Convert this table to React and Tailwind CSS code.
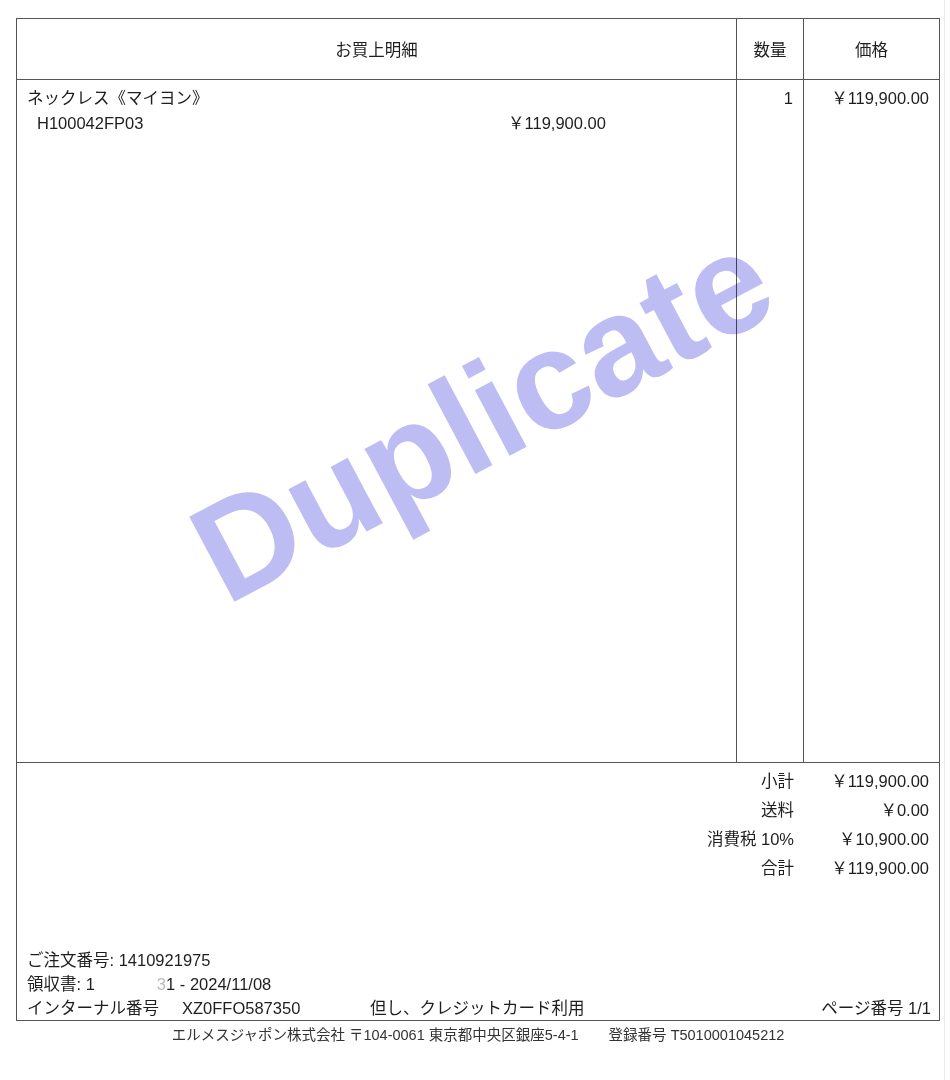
import React from 'react';

const font = { fontFamily: '"Liberation Sans", "Noto Sans CJK JP", sans-serif' };

const totals = [
  { label: '小計', value: '￥119,900.00' },
  { label: '送料', value: '￥0.00' },
  { label: '消費税 10%', value: '￥10,900.00' },
  { label: '合計', value: '￥119,900.00' },
];

const App = () => {
  return (
    <div className="relative w-[950px] h-[1080px] bg-white text-[#1e1e1e] overflow-hidden" style={font}>
      {/* faint scan edge */}
      <div className="absolute top-0 left-[944px] w-px h-full bg-[#ececec]" />

      <div className="pt-[18px] pl-[16px]">
        <div className="w-[924px] border border-[#555] text-[16.5px]">
          {/* 見出し */}
          <div className="grid grid-cols-[720px_67px_1fr] h-[61px] border-b border-[#555]">
            <div className="border-r border-[#555] flex items-center justify-center pt-[2px]">お買上明細</div>
            <div className="border-r border-[#555] flex items-center justify-center pt-[2px]">数量</div>
            <div className="flex items-center justify-center pt-[2px]">価格</div>
          </div>

          {/* 明細 */}
          <div className="grid grid-cols-[720px_67px_1fr] h-[683px] border-b border-[#555]">
            <div className="border-r border-[#555] pt-[6px] pl-[10px] leading-[25px]">
              <div>ネックレス《マイヨン》</div>
              <div className="flex">
                <span className="w-[481px] pl-[10px]">H100042FP03</span>
                <span>￥119,900.00</span>
              </div>
            </div>
            <div className="border-r border-[#555] pt-[6px] pr-[10px] text-right leading-[25px]">1</div>
            <div className="pt-[6px] pr-[10px] text-right leading-[25px]">￥119,900.00</div>
          </div>

          {/* 合計・備考 */}
          <div className="h-[257px] flex flex-col justify-between">
            <div className="pt-[4px]">
              {totals.map((t) => (
                <div key={t.label} className="grid grid-cols-[787px_1fr] h-[29px] items-center">
                  <span className="text-right pr-[10px]">{t.label}</span>
                  <span className="text-right pr-[10px]">{t.value}</span>
                </div>
              ))}
            </div>
            <div className="pl-[10px] pr-[8px] leading-[24px]">
              <div>ご注文番号: 1410921975</div>
              <div className="flex">
                <span>領収書: 1</span>
                <span className="w-[62px]" />
                <span><span className="text-[#bbb]">3</span>1 - 2024/11/08</span>
              </div>
              <div className="flex">
                <span className="w-[155px]">インターナル番号</span>
                <span className="w-[188px]">XZ0FFO587350</span>
                <span>但し、クレジットカード利用</span>
                <span className="ml-auto">ページ番号 1/1</span>
              </div>
            </div>
          </div>
        </div>

        <div className="w-[924px] flex justify-center pt-[4px] text-[14.5px] text-[#333]">
          <span>エルメスジャポン株式会社 〒104-0061 東京都中央区銀座5-4-1</span>
          <span className="ml-[30px]">登録番号 T5010001045212</span>
        </div>
      </div>

      {/* 透かし */}
      <div className="absolute left-[482px] top-[416px] -translate-x-1/2 -translate-y-1/2 -rotate-[28deg] text-[140px] font-bold leading-none text-[#bdbdf3] mix-blend-multiply pointer-events-none whitespace-nowrap">
        Duplicate
      </div>
    </div>
  );
};

export default App;
